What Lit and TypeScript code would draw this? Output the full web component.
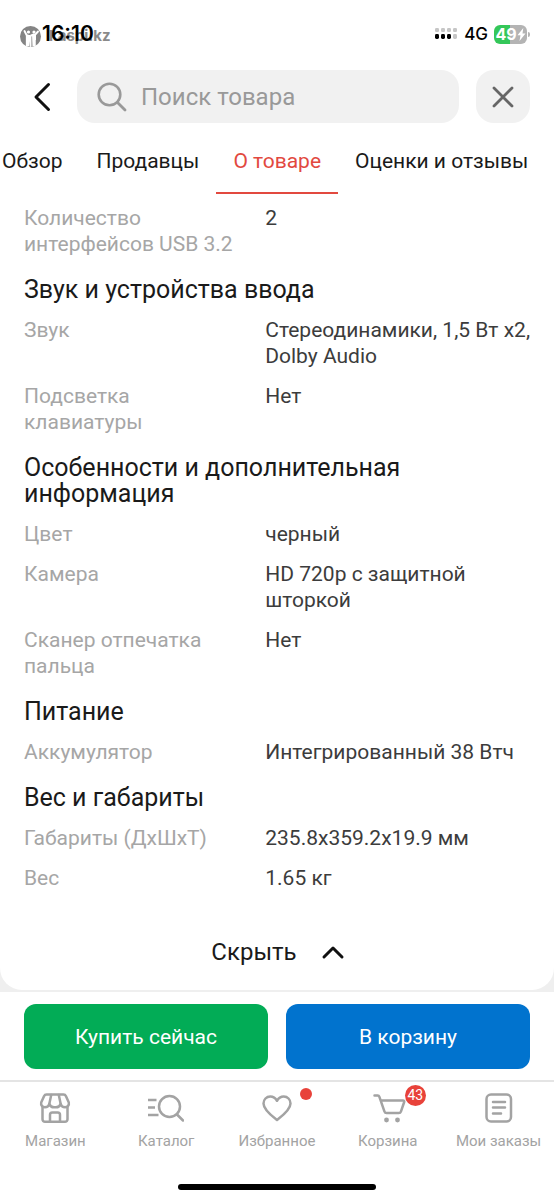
import { LitElement, html, css, svg, nothing } from "lit";
import { customElement, state } from "lit/decorators.js";
import { classMap } from "lit/directives/class-map.js";

interface Spec {
  name: string;
  value: string;
}

interface SpecGroup {
  title?: string;
  specs: Spec[];
}

const groups: SpecGroup[] = [
  { specs: [{ name: "Количество интерфейсов USB 3.2", value: "2" }] },
  {
    title: "Звук и устройства ввода",
    specs: [
      { name: "Звук", value: "Стереодинамики, 1,5 Вт x2, Dolby Audio" },
      { name: "Подсветка клавиатуры", value: "Нет" },
    ],
  },
  {
    title: "Особенности и дополнительная информация",
    specs: [
      { name: "Цвет", value: "черный" },
      { name: "Камера", value: "HD 720p с защитной шторкой" },
      { name: "Сканер отпечатка пальца", value: "Нет" },
    ],
  },
  { title: "Питание", specs: [{ name: "Аккумулятор", value: "Интегрированный 38 Втч" }] },
  {
    title: "Вес и габариты",
    specs: [
      { name: "Габариты (ДхШхТ)", value: "235.8x359.2x19.9 мм" },
      { name: "Вес", value: "1.65 кг" },
    ],
  },
];

const tabs = ["Обзор", "Продавцы", "О товаре", "Оценки и отзывы"];

@customElement("status-bar")
class StatusBar extends LitElement {
  static styles = css`
    :host {
      display: flex;
      align-items: center;
      justify-content: space-between;
      height: 68px;
      padding: 0 24px 0 20px;
      font-family: Inter, sans-serif;
      color: #000;
    }
    .left {
      position: relative;
      display: flex;
      align-items: center;
      gap: 8px;
      padding-top: 4px;
      font-size: 15px;
      font-weight: 700;
      line-height: 20px;
      color: #8a8a8a;
    }
    .time {
      position: absolute;
      left: 22px;
      top: 0;
      font-size: 21px;
      font-weight: 600;
      line-height: 24px;
      color: #000;
    }
    .right {
      display: flex;
      align-items: center;
      gap: 6px;
      font-size: 17px;
      font-weight: 500;
      line-height: 20px;
    }
    .battery {
      display: flex;
      align-items: center;
      gap: 1px;
    }
    .charge {
      display: flex;
      align-items: center;
      justify-content: center;
      width: 33px;
      height: 19px;
      border-radius: 6px;
      background: linear-gradient(90deg, #34c759 49%, #b4b4b4 49%);
      color: #fff;
      font-size: 16px;
      font-weight: 700;
    }
    .tip {
      width: 2px;
      height: 5px;
      border-radius: 0 2px 2px 0;
      background: #b4b4b4;
    }
    svg {
      display: block;
    }
  `;

  render() {
    return html`
      <div class="left">
        <svg width="21" height="21" viewBox="0 0 21 21" aria-hidden="true">
          <circle cx="10.500" cy="10.500" r="10.500" fill="#848484" />
          <path
            d="M4.500 5 6.800 9.500v10M10.500 20V11L8 9.500 M14.800 19.500V9L18 5.500 M11 9.500l3-1"
            stroke="#fff" stroke-width="1.900" fill="none" stroke-linecap="round"
          />
          <circle cx="8.500" cy="6" r="1.600" fill="#fff" />
          <circle cx="14" cy="6" r="1.600" fill="#fff" />
          <path d="M6 9h4v6l-1 5H6z M12 9h4v5h-1l-.5 6h-2z" fill="#fff" />
        </svg>
        <span>kaspi.kz</span>
        <span class="time">16:10</span>
      </div>
      <div class="right">
        <svg width="23" height="12" viewBox="0 0 23 12" aria-hidden="true">
          ${[0, 1, 2, 3].map(
            (i) => svg`
              <rect x=${i * 6} y="0" width="4" height="4" rx="1.200" fill="#c6c6c6" />
              <rect x=${i * 6} y="6" width="4" height="5" rx="1.400" fill=${i < 3 ? "#000" : "#c6c6c6"} />
            `,
          )}
        </svg>
        <span>4G</span>
        <div class="battery">
          <div class="charge">
            49
            <svg width="9" height="13" viewBox="0 0 8 13" aria-hidden="true">
              <path d="M5.800 0 0 7.300h3L2 13 8 5.500H5z" fill="#fff" />
            </svg>
          </div>
          <div class="tip"></div>
        </div>
      </div>
    `;
  }
}

@customElement("search-header")
class SearchHeader extends LitElement {
  static styles = css`
    :host {
      display: flex;
      align-items: center;
      gap: 17px;
      padding: 2px 24px 0;
    }
    button {
      display: flex;
      align-items: center;
      justify-content: center;
      flex: none;
      margin: 0;
      padding: 0;
      border: 0;
      background: none;
      cursor: pointer;
    }
    .back {
      width: 36px;
      height: 53px;
    }
    .close {
      width: 54px;
      height: 53px;
      border-radius: 18px;
      background: #f1f1f1;
    }
    .field {
      display: flex;
      flex: 1;
      min-width: 0;
      align-items: center;
      gap: 14px;
      height: 53px;
      box-sizing: border-box;
      padding: 0 20px;
      border-radius: 18px;
      background: #f1f1f1;
    }
    input {
      flex: 1;
      min-width: 0;
      padding: 0;
      border: 0;
      outline: 0;
      background: none;
      font: 400 24px/30px Roboto, sans-serif;
      color: #222;
    }
    input::placeholder {
      color: #999;
      opacity: 1;
    }
    svg {
      display: block;
      flex: none;
    }
  `;

  render() {
    return html`
      <button class="back" aria-label="Назад">
        <svg width="18" height="30" viewBox="0 0 18 30" fill="none">
          <path d="M15.500 2.500 3 15l12.500 12.500" stroke="#111" stroke-width="3" stroke-linecap="round" stroke-linejoin="round" />
        </svg>
      </button>
      <label class="field">
        <svg width="30" height="30" viewBox="0 0 30 30" fill="none" aria-hidden="true">
          <circle cx="12.500" cy="12.500" r="10.800" stroke="#999" stroke-width="2.600" />
          <path d="m20.500 20.500 7.500 7.500" stroke="#999" stroke-width="2.800" stroke-linecap="round" />
        </svg>
        <input type="text" placeholder="Поиск товара" aria-label="Поиск товара" />
      </label>
      <button class="close" aria-label="Закрыть">
        <svg width="24" height="24" viewBox="0 0 24 24" fill="none">
          <path d="m3 3 18 18M21 3 3 21" stroke="#666" stroke-width="2.800" stroke-linecap="round" />
        </svg>
      </button>
    `;
  }
}

@customElement("bottom-nav")
class BottomNav extends LitElement {
  static styles = css`
    :host {
      display: block;
      border-top: 2px solid #e4e4e4;
      background: #fff;
    }
    nav {
      display: grid;
      grid-template-columns: repeat(5, minmax(0, 1fr));
      padding-top: 8px;
    }
    a {
      display: flex;
      flex-direction: column;
      align-items: center;
      gap: 5px;
      color: #a3a3a3;
      text-decoration: none;
      font-size: 15px;
      line-height: 20px;
      white-space: nowrap;
    }
    .icon {
      position: relative;
      width: 36px;
      height: 36px;
    }
    svg {
      display: block;
    }
    .badge {
      position: absolute;
      left: 35px;
      top: -5px;
      width: 21px;
      height: 21px;
      border-radius: 50%;
      background: #e8423a;
      color: #fff;
      font-size: 14px;
      line-height: 21px;
      text-align: center;
    }
    .dot {
      position: absolute;
      left: 41px;
      top: -2px;
      width: 12px;
      height: 12px;
      border-radius: 50%;
      background: #e8423a;
    }
    .home {
      width: 198px;
      height: 6px;
      margin: 33px auto 11px;
      border-radius: 3px;
      background: #000;
    }
  `;

  private item(label: string, shape: unknown, mark: unknown = nothing) {
    return html`
      <a href="#">
        <span class="icon">
          <svg
            width="36" height="36" viewBox="0 0 36 36" fill="none" stroke="#a3a3a3"
            stroke-width="2.500" stroke-linecap="round" stroke-linejoin="round" aria-hidden="true"
          >${shape}</svg>
          ${mark}
        </span>
        <span>${label}</span>
      </a>
    `;
  }

  render() {
    return html`
      <nav>
        ${this.item(
          "Магазин",
          svg`<path d="M9.500 4.500h17c1.300 0 2 .6 2.500 1.700l2.800 6.300c.6 2.600-1.300 4.800-3.800 4.800-2.300 0-3.800-1.500-4.300-3.300-.7 2-2.600 3.300-4.700 3.300h-2c-2.100 0-4-1.300-4.700-3.300-.5 1.800-2 3.300-4.300 3.300-2.500 0-4.400-2.200-3.800-4.800L7 6.200c.5-1.100 1.200-1.700 2.500-1.700z"/>
          <path d="M14.200 5l-1.900 9M21.800 5l1.900 9"/>
          <path d="M5.500 17v12.300a2.500 2.500 0 0 0 2.500 2.500h20a2.500 2.500 0 0 0 2.500-2.500V17"/>
          <path d="M13 31.500v-6.800c0-1.500.8-2.300 2.300-2.300h5.400c1.500 0 2.300.8 2.300 2.300v6.800"/>`,
        )}
        ${this.item(
          "Каталог",
          svg`<circle cx="21.500" cy="16.500" r="10.500"/><path d="m29 24.500 6 6"/>
          <path d="M0 10h8.500M0 17.500h7M0 25h10.500" stroke-linecap="butt"/>`,
        )}
        ${this.item(
          "Избранное",
          svg`<path d="M18 30C13.500 26.500 4.500 20 4.500 13.500c0-4 3-7 6.700-7 2.800 0 5.300 1.500 6.800 4.300 1.500-2.800 4-4.300 6.800-4.300 3.700 0 6.700 3 6.700 7C31.500 20 22.500 26.500 18 30z"/>`,
          html`<span class="dot"></span>`,
        )}
        ${this.item(
          "Корзина",
          svg`<path d="M4.500 5.500h3.200c.9 0 1.400.4 1.700 1.300l5 14.600c.4 1.200 1 1.700 2.200 1.700h12.200c1.200 0 1.800-.5 2.200-1.700l3.200-9.400c.3-.9-.1-1.500-1.200-1.500H11"/>
          <circle cx="16.500" cy="30" r="2.400" fill="#a3a3a3" stroke="none"/>
          <circle cx="27.500" cy="30" r="2.400" fill="#a3a3a3" stroke="none"/>`,
          html`<span class="badge">43</span>`,
        )}
        ${this.item(
          "Мои заказы",
          svg`<rect x="5.500" y="4.500" width="24.500" height="27" rx="4.500"/>
          <path d="M12 12h12M12 17.500h12M12 23.500h8"/>`,
        )}
      </nav>
      <div class="home"></div>
    `;
  }
}

@customElement("app-root")
class AppRoot extends LitElement {
  @state() private active = 2;

  static styles = css`
    :host {
      display: flex;
      flex-direction: column;
      min-height: 100vh;
      background: #fff;
      font-family: Roboto, sans-serif;
      color: #1a1a1a;
    }
    button {
      margin: 0;
      border: 0;
      background: none;
      color: inherit;
      font-family: inherit;
      cursor: pointer;
    }
    .tabs {
      display: flex;
      overflow: hidden;
      margin-top: 16px;
    }
    .tab {
      flex: none;
      padding: 8px 17px 17px;
      border-bottom: 2px solid transparent;
      font-size: 21px;
      line-height: 28px;
      white-space: nowrap;
    }
    .tab:first-child {
      margin-left: -15px;
    }
    .tab.active {
      border-color: #e2493f;
      color: #e2493f;
    }
    .back {
      flex: 1;
      padding-bottom: 2px;
      background: #efefef;
    }
    .sheet {
      padding: 11px 22px 20px 24px;
      border-radius: 0 0 22px 22px;
      background: #fff;
    }
    h2 {
      margin: 20px 0 14px;
      font-size: 25px;
      font-weight: 400;
      line-height: 26px;
    }
    dl {
      display: grid;
      gap: 14px;
      margin: 0;
      font-size: 21px;
      line-height: 26px;
    }
    .row {
      display: grid;
      grid-template-columns: minmax(0, 9fr) minmax(0, 11fr);
      gap: 23px;
    }
    dt {
      color: #a6a6a6;
    }
    dd {
      margin: 0;
      color: #3c3c3c;
    }
    .collapse {
      display: flex;
      align-items: center;
      gap: 24px;
      margin: 43px auto 0;
      padding: 0;
      font-size: 24px;
      line-height: 36px;
    }
    .actions {
      display: grid;
      grid-template-columns: 1fr 1fr;
      gap: 18px;
      padding: 12px 24px 11px;
      background: #fff;
    }
    .action {
      height: 65px;
      border-radius: 12px;
      color: #fff;
      font-size: 21px;
    }
    .buy {
      background: #02ac56;
    }
    .cart {
      background: #0173ce;
    }
  `;

  render() {
    return html`
      <status-bar></status-bar>
      <search-header></search-header>
      <div class="tabs" role="tablist">
        ${tabs.map(
          (name, i) => html`
            <button
              role="tab"
              aria-selected=${i === this.active}
              class=${classMap({ tab: true, active: i === this.active })}
              @click=${() => (this.active = i)}
            >${name}</button>
          `,
        )}
      </div>
      <div class="back">
        <main class="sheet">
          ${groups.map(
            (group) => html`
              ${group.title ? html`<h2>${group.title}</h2>` : nothing}
              <dl>
                ${group.specs.map(
                  (spec) => html`<div class="row"><dt>${spec.name}</dt><dd>${spec.value}</dd></div>`,
                )}
              </dl>
            `,
          )}
          <button class="collapse">
            Скрыть
            <svg width="24" height="16" viewBox="0 0 24 16" fill="none" aria-hidden="true">
              <path d="m3 13 9-9 9 9" stroke="#111" stroke-width="3" stroke-linecap="round" stroke-linejoin="round" />
            </svg>
          </button>
        </main>
      </div>
      <div class="actions">
        <button class="action buy">Купить сейчас</button>
        <button class="action cart">В корзину</button>
      </div>
      <bottom-nav></bottom-nav>
    `;
  }
}
